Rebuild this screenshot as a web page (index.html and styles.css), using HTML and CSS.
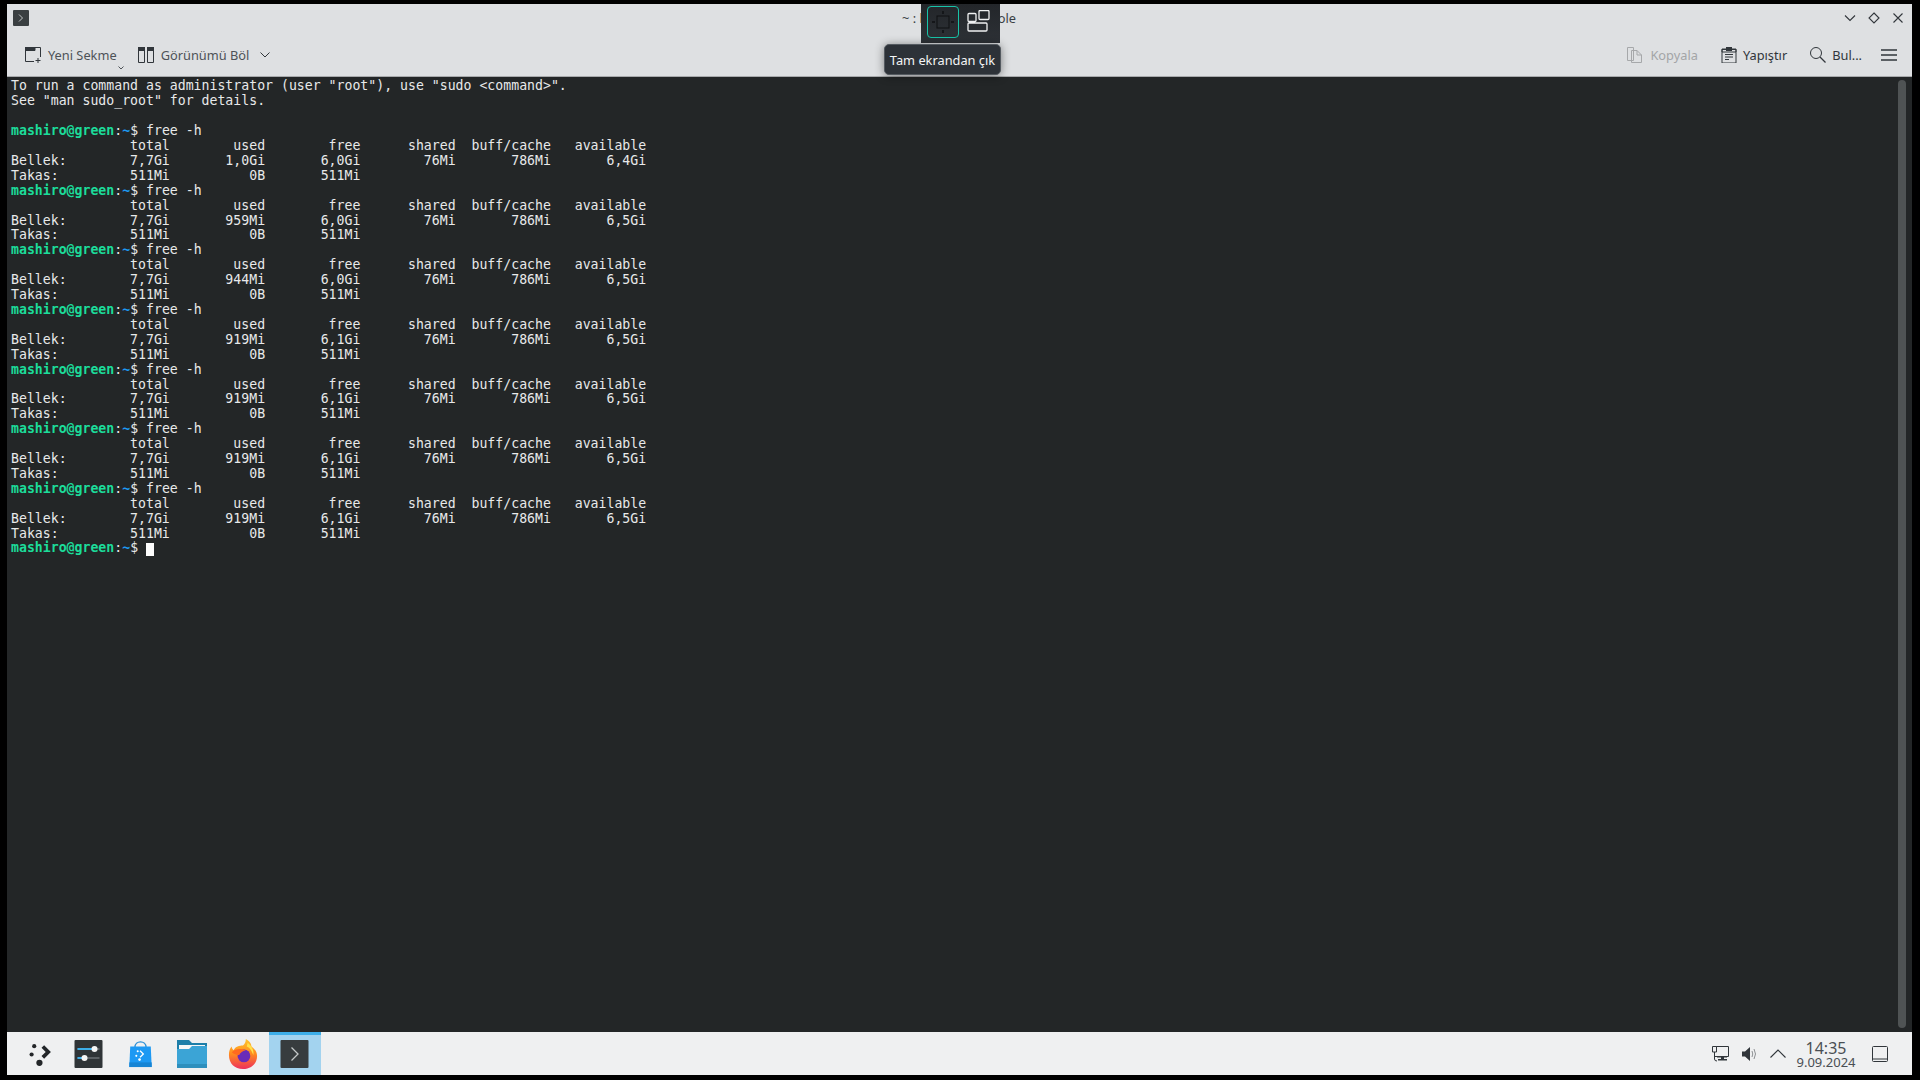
FILE: index.html
```html
<!DOCTYPE html>
<html lang="tr">
<head>
<meta charset="utf-8">
<title>Konsole</title>
<link rel="stylesheet" href="styles.css">
</head>
<body>
<div class="screen">
  <header class="titlebar">
    <svg class="app-icon" viewBox="0 0 16 16"><rect width="16" height="16" rx="1" fill="#3a3f41"/><path d="M6 4.500 9.500 8 6 11.500" fill="none" stroke="#c4c8c8" stroke-width="1"/></svg>
    <div class="title">~ : bash — Konsole</div>
    <div class="winbtns">
      <svg viewBox="0 0 14 14"><path d="M2 4.500 7 9.500 12 4.500" fill="none" stroke="#31363b" stroke-width="1.100"/></svg>
      <svg viewBox="0 0 14 14"><path d="M7 2 12 7 7 12 2 7Z" fill="none" stroke="#31363b" stroke-width="1.100"/></svg>
      <svg viewBox="0 0 14 14"><path d="M2.500 2.500 11.500 11.500M11.500 2.500 2.500 11.500" fill="none" stroke="#31363b" stroke-width="1.100"/></svg>
    </div>
  </header>
  <nav class="toolbar">
    <div class="tool new-tab">
      <svg class="ico" viewBox="0 0 16 16"><path d="M.5 14.500V.5H15.500V10M.5 14.500H9M.5 3.500H10V.5" fill="none" stroke="#31363b"/><path d="M0 0H10V3.500H0Z" fill="#31363b"/><path d="M13 11V16M10.500 13.500H15.500" stroke="#31363b"/></svg>
      <span>Yeni Sekme</span>
      <svg class="mini" viewBox="0 0 6 4"><path d="M.5 .5 3 3 5.500 .5" fill="none" stroke="#4d5257"/></svg>
    </div>
    <div class="tool split">
      <svg class="ico" viewBox="0 0 16 16"><path d="M.5 .5H6.500V15.500H.5ZM9.500 .5H15.500V15.500H9.500Z" fill="none" stroke="#31363b"/><path d="M0 0H7V4H0ZM9 0H16V4H9Z" fill="#31363b"/></svg>
      <span>Görünümü Böl</span>
      <svg class="chev" viewBox="0 0 10 6"><path d="M.5 .5 5 5 9.500 .5" fill="none" stroke="#31363b"/></svg>
    </div>
    <div class="spacer"></div>
    <div class="tool copy">
      <svg class="ico" viewBox="0 0 16 16"><path d="M.5 .5H6.500V13.500H.5ZM4.500 3.500H10L14.500 8V15.500H4.500ZM10 3.500V8H14.500" fill="#dee0e2" stroke="#a6a8aa"/></svg>
      <span>Kopyala</span>
    </div>
    <div class="tool paste">
      <svg class="ico" viewBox="0 0 16 16"><path d="M1 2.500H15V16H1Z" fill="none" stroke="#31363b"/><path d="M5 0H11V4H5Z" fill="#31363b"/><path d="M1 2H15V5H1ZM4 7.500H12M4 10H12M4 12.500H8" fill="none" stroke="#31363b"/></svg>
      <span>Yapıştır</span>
    </div>
    <div class="tool find">
      <svg class="ico" viewBox="0 0 16 16"><circle cx="6" cy="6" r="5.500" fill="none" stroke="#31363b"/><path d="M10 10 15.500 15.500" stroke="#31363b" stroke-width="1.200"/></svg>
      <span>Bul...</span>
    </div>
    <svg class="burger" viewBox="0 0 16 12"><path d="M0 1H16M0 6H16M0 11H16" stroke="#31363b" stroke-width="1.600"/></svg>
  </nav>
  <main class="terminal">
<pre class="output">To run a command as administrator (user "root"), use "sudo &lt;command&gt;".
See "man sudo_root" for details.

<span class="user">mashiro@green</span>:<span class="path">~</span>$ free -h
               total        used        free      shared  buff/cache   available
Bellek:        7,7Gi       1,0Gi       6,0Gi        76Mi       786Mi       6,4Gi
Takas:         511Mi          0B       511Mi
<span class="user">mashiro@green</span>:<span class="path">~</span>$ free -h
               total        used        free      shared  buff/cache   available
Bellek:        7,7Gi       959Mi       6,0Gi        76Mi       786Mi       6,5Gi
Takas:         511Mi          0B       511Mi
<span class="user">mashiro@green</span>:<span class="path">~</span>$ free -h
               total        used        free      shared  buff/cache   available
Bellek:        7,7Gi       944Mi       6,0Gi        76Mi       786Mi       6,5Gi
Takas:         511Mi          0B       511Mi
<span class="user">mashiro@green</span>:<span class="path">~</span>$ free -h
               total        used        free      shared  buff/cache   available
Bellek:        7,7Gi       919Mi       6,1Gi        76Mi       786Mi       6,5Gi
Takas:         511Mi          0B       511Mi
<span class="user">mashiro@green</span>:<span class="path">~</span>$ free -h
               total        used        free      shared  buff/cache   available
Bellek:        7,7Gi       919Mi       6,1Gi        76Mi       786Mi       6,5Gi
Takas:         511Mi          0B       511Mi
<span class="user">mashiro@green</span>:<span class="path">~</span>$ free -h
               total        used        free      shared  buff/cache   available
Bellek:        7,7Gi       919Mi       6,1Gi        76Mi       786Mi       6,5Gi
Takas:         511Mi          0B       511Mi
<span class="user">mashiro@green</span>:<span class="path">~</span>$ free -h
               total        used        free      shared  buff/cache   available
Bellek:        7,7Gi       919Mi       6,1Gi        76Mi       786Mi       6,5Gi
Takas:         511Mi          0B       511Mi
<span class="user">mashiro@green</span>:<span class="path">~</span>$ <span class="cursor"> </span></pre>
    <div class="scrollbar"></div>
  </main>
  <footer class="panel">
    <div class="launcher">
      <svg viewBox="1 1 21 23"><path d="M12 6.500 14.500 4 21 10.500 14.500 17 12 14.500 16 10.500Z" fill="#232629"/><circle cx="5" cy="5" r="2" fill="#232629"/><circle cx="2.500" cy="13" r="2" fill="#232629"/><circle cx="10" cy="21" r="3" fill="#232629"/></svg>
    </div>
    <div class="task">
      <svg class="i28" viewBox="0 0 28 28"><rect width="28" height="28" rx="1" fill="#2f3437"/><path d="M3 9H25" stroke="#5b6064" stroke-width="2"/><path d="M3 9H20" stroke="#3daee9" stroke-width="2"/><circle cx="20" cy="9" r="3" fill="#f5f5f5"/><path d="M3 18H25" stroke="#5b6064" stroke-width="2"/><path d="M3 18H10" stroke="#3daee9" stroke-width="2"/><circle cx="10" cy="18" r="3" fill="#f5f5f5"/></svg>
    </div>
    <div class="task">
      <svg class="i28" viewBox="0 0 28 30"><path d="M8 8C8 0 20 0 20 8" fill="none" stroke="#2b8fd6" stroke-width="1.500"/><path d="M3 7H25L26 29H2Z" fill="#1d99f3"/><path d="M2 24H26V29H2Z" fill="#1684d4"/><circle cx="11" cy="12" r="1.100" fill="#fff"/><circle cx="9.500" cy="17" r="1.100" fill="#fff"/><circle cx="13" cy="21" r="1.400" fill="#fff"/><path d="M14 11 18 15 14 19 13 18 16 15 13 12Z" fill="#fff"/></svg>
    </div>
    <div class="task">
      <svg class="i30" viewBox="0 0 30 28"><path d="M0 0H12L15 3H30V28H0Z" fill="#1d7ea9"/><path d="M2 5H28V12H2Z" fill="#f4f6f7"/><path d="M0 9H12L15 6H30V28H0Z" fill="#3ba4d6"/><path d="M0 24H30V28H0Z" fill="#2d8fbd"/></svg>
    </div>
    <div class="task">
      <svg class="i30" viewBox="0 0 30 32"><defs><linearGradient id="fx" x1="0" y1="0" x2="0" y2="1"><stop offset="0" stop-color="#ffc52e"/><stop offset=".5" stop-color="#ff8a1f"/><stop offset="1" stop-color="#ee2f5c"/></linearGradient></defs><path d="M15 32C6 32 0 26 0 17 0 13 1 10 3 8 3 10 4 11 5 12 7 8 11 7 15 7 17 5 18 3 18 0 23 3 24 6 24 8 28 11 30 14 30 18 30 26 24 32 15 32Z" fill="url(#fx)"/><circle cx="16" cy="18" r="6.800" fill="#6a2bb8"/><path d="M3 14C7 10 13 10 18 12 14 13 12 15 11 17 8 17 5 16 3 14Z" fill="#ff6a1f"/><path d="M20 4C24 7 27 12 26 17 24 12 22 9 19 8Z" fill="#ffe14a"/></svg>
    </div>
    <div class="task active">
      <svg class="i28" viewBox="0 0 28 28"><rect width="28" height="28" rx="1" fill="#373c3e"/><path d="M11 7.500 17.500 14 11 20.500" fill="none" stroke="#c4c8c8" stroke-width="1.300"/></svg>
    </div>
    <div class="spacer"></div>
    <div class="tray">
      <svg class="net" viewBox="0 0 17 17"><path d="M4 1.500H16.500V11.500H3" fill="none" stroke="#31363b"/><path d="M5 11H15V12.500H12V14H15V15.500H6V14H9V12.500H5Z" fill="#31363b"/><path d="M.5 1.500H4.500V7H.5Z" fill="#eff0f1" stroke="#31363b"/><path d="M2.500 7V14Q2.500 16 5 16" fill="none" stroke="#31363b"/></svg>
      <svg class="vol" viewBox="0 0 16 16"><path d="M0 5.500H3L8 1V15L3 10.500H0Z" fill="#31363b"/><path d="M10 5Q11.500 8 10 11M12 3Q15 8 12 13" fill="none" stroke="#8d9093"/></svg>
      <svg class="caret" viewBox="0 0 16 9"><path d="M.5 8.500 8 1 15.500 8.500" fill="none" stroke="#31363b" stroke-width="1.100"/></svg>
      <div class="clock"><div class="time">14:35</div><div class="date">9.09.2024</div></div>
      <svg class="desk" viewBox="0 0 16 16"><rect x=".5" y=".5" width="15" height="15" rx="1" fill="none" stroke="#31363b"/><path d="M1 13H15" stroke="#31363b"/></svg>
    </div>
  </footer>
  <div class="overlay">
    <div class="focus-box">
      <svg viewBox="0 0 26 26"><rect x="7" y="7" width="12" height="12" fill="none" stroke="#0f1113"/><path d="M13 2V5M13 21V24M2 13H5M21 13H24" stroke="#0f1113" stroke-width="1.500"/></svg>
    </div>
    <svg class="layout-ico" viewBox="0 0 23 22"><path d="M1 4.500Q1 3.500 2 3.500H8Q9 3.500 9 4.500V10.500Q9 11.500 8 11.500H2Q1 11.500 1 10.500ZM12 1.500Q12 .5 13 .5H21Q22 .5 22 1.500V8.500Q22 9.500 21 9.500H13Q12 9.500 12 8.500ZM1 14Q1 13 2 13H19Q20 13 20 14V20Q20 21 19 21H2Q1 21 1 20Z" fill="none" stroke="#f0f1f2" stroke-width="1.300"/></svg>
  </div>
  <div class="tooltip">Tam ekrandan çık</div>
</div>
</body>
</html>
```
FILE: styles.css
```css
* { box-sizing: border-box; }
html, body { margin: 0; height: 100%; background: #000; }
body { overflow: hidden; }

.screen {
  position: relative;
  display: flex;
  flex-direction: column;
  height: 1080px;
  width: 1920px;
  padding: 4px 8px 5px 7px;
  font-family: "Noto Sans", sans-serif;
  font-size: 12.8px;
  color: #31363b;
}

.titlebar {
  display: flex;
  align-items: center;
  justify-content: space-between;
  height: 36px;
  padding: 0 7px 8px 6px;
  background: #dee0e2;
}
.app-icon { width: 16px; height: 16px; flex: none; }
.title {
  flex: 1;
  text-align: center;
  font-size: 12.8px;
  color: #3a3f44;
  margin-left: 46px;
}
.winbtns { display: flex; gap: 10px; align-items: center; }
.winbtns svg { width: 14px; height: 14px; }

.toolbar {
  display: flex;
  align-items: center;
  height: 37px;
  padding: 0 15px 6px 18px;
  background: #dee0e2;
  border-bottom: 1px solid #a8aaac;
}
.spacer { flex: 1; }
.tool { display: flex; align-items: center; gap: 7px; position: relative; }
.tool span { color: #4d5257; white-space: nowrap; }
.ico { width: 16px; height: 16px; flex: none; }
.new-tab { margin-right: 21px; }
.mini {
  position: absolute;
  right: -7px;
  bottom: -6px;
  width: 6px;
  height: 4px;
}
.chev { width: 10px; height: 6px; margin-left: 4px; }
.copy { margin-right: 23px; gap: 7px; }
.copy span { color: #a3a5a7; }
.paste { margin-right: 23px; gap: 6px; }
.paste span { color: #31363b; }
.find { gap: 6px; margin-right: 19px; }
.find span { color: #31363b; }
.burger { width: 16px; height: 12px; }

.terminal {
  flex: 1;
  display: flex;
  min-height: 0;
  background: #232627;
}
.output {
  flex: 1;
  margin: 0;
  padding: 2.4px 0 0 4px;
  font-family: "DejaVu Sans Mono", monospace;
  font-size: 13.2px;
  line-height: 14.9px;
  color: #e8e9ea;
  white-space: pre;
}
.user { color: #1cdc9a; font-weight: 700; }
.path { color: #1d99f3; font-weight: 700; }
.cursor { display: inline-block; width: 8px; height: 13px; background: #fcfcfc; vertical-align: -2px; }
.scrollbar {
  width: 8px;
  margin: 3px 6px 4px 0;
  border-radius: 4px;
  background: #4f5354;
}

.panel {
  display: flex;
  align-items: stretch;
  height: 43px;
  padding-left: 11px;
  background: #eff0f1;
}
.launcher {
  width: 45px;
  display: flex;
  align-items: center;
  justify-content: center;
}
.launcher svg { width: 24px; height: 24px; }
.task {
  width: 51.5px;
  display: flex;
  align-items: center;
  justify-content: center;
}
.task.active {
  background: #a3d3ef;
  border-top: 3px solid #3daee9;
  padding-bottom: 3px;
}
.i28 { width: 29px; height: 28px; }
.i30 { width: 30px; height: 30px; }
.tray {
  display: flex;
  align-items: center;
  padding-right: 24px;
}
.tray svg { flex: none; }
.net { width: 17px; height: 17px; margin-right: 13px; }
.vol { width: 16px; height: 16px; margin-right: 12px; }
.caret { width: 16px; height: 9px; margin-right: 9px; }
.clock { width: 62px; text-align: center; color: #4a4f54; margin-right: 15px; padding-top: 1px; }
.time { font-size: 16px; line-height: 16px; }
.date { font-size: 13px; line-height: 13px; }
.desk { width: 16px; height: 16px; }

.overlay {
  position: absolute;
  left: 921px;
  top: 4px;
  width: 79px;
  height: 39px;
  padding: 2px 10px 0 6px;
  display: flex;
  align-items: flex-start;
  justify-content: space-between;
  background: linear-gradient(#23262a, #2d3136);
}
.focus-box {
  width: 32px;
  height: 32px;
  padding: 2px;
  border: 1px solid #17c3a8;
  border-radius: 4px;
}
.focus-box svg { display: block; width: 26px; height: 26px; }
.layout-ico { width: 23px; height: 22px; margin-top: 4px; }

.tooltip {
  position: absolute;
  left: 884px;
  top: 44px;
  width: 117px;
  height: 31px;
  display: flex;
  align-items: center;
  justify-content: center;
  font-size: 12.8px;
  color: #f4f5f6;
  background: #2d3238;
  border: 1px solid #545a60;
  border-radius: 5px;
  box-shadow: 0 1px 10px rgba(0, 0, 0, .45);
  white-space: nowrap;
}
```
